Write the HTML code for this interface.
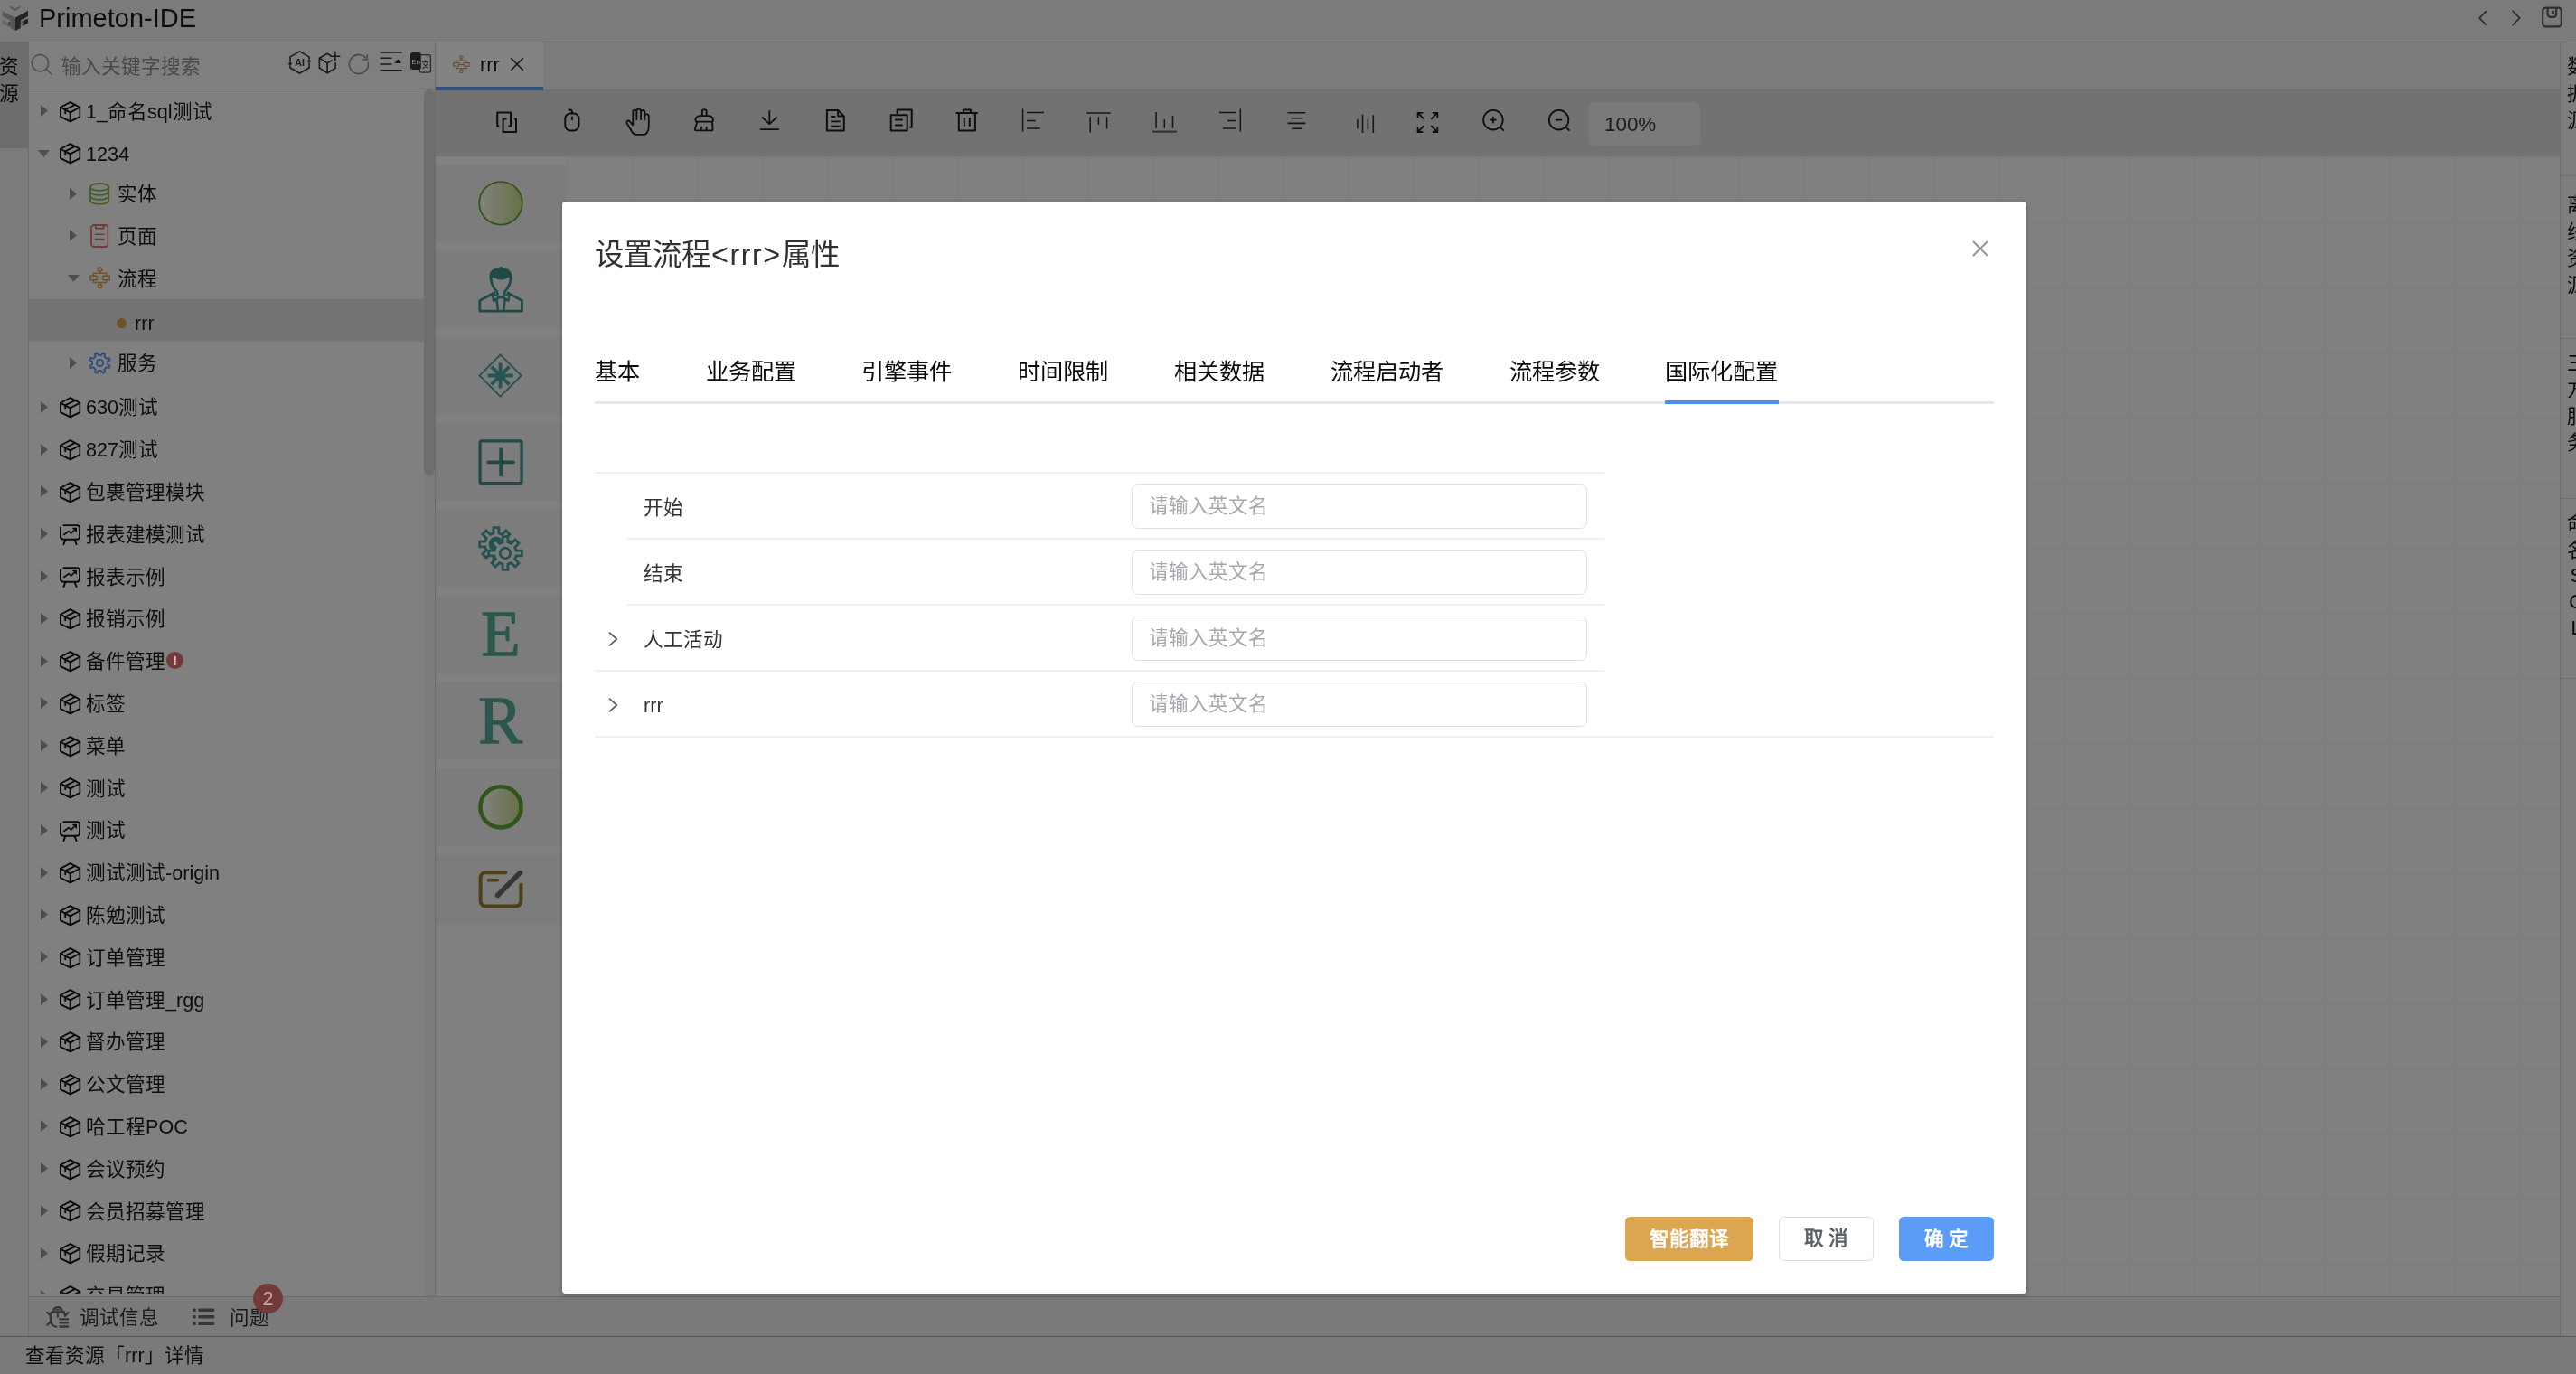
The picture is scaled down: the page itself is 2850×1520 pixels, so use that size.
<!DOCTYPE html>
<html lang="zh-CN">
<head>
<meta charset="utf-8">
<title>Primeton-IDE</title>
<style>
*{box-sizing:border-box;margin:0;padding:0}
html,body{width:2850px;height:1520px;overflow:hidden;background:#808080}
body{position:relative;font-family:"Liberation Sans",sans-serif;font-size:21.6px;color:#111;-webkit-font-smoothing:antialiased}
#W{position:absolute;left:0;top:0;width:2850px;height:1520px;will-change:transform}
.abs{position:absolute}
svg{display:block;overflow:visible}
/* ---------- title bar ---------- */
#titlebar{position:absolute;left:0;top:0;width:2850px;height:47px;background:#7b7b7b;border-bottom:1px solid #6b6b6b}
#titlebar .name{position:absolute;left:43px;top:0;height:40px;line-height:40px;font-size:29px;color:#0d0d0d;letter-spacing:0}
/* ---------- left strip ---------- */
#lstrip{position:absolute;left:0;top:47px;width:32px;height:1431px;background:#7b7b7b;border-right:1px solid #6e6e6e}
#lstrip .act{position:absolute;left:0;top:0;width:31px;height:117px;background:#6d6d6d}
#lstrip .act span{position:absolute;left:-1px;width:22px;font-size:21.6px;line-height:30px;color:#0a0a0a}
/* ---------- search ---------- */
#search{position:absolute;left:32px;top:47px;width:449px;height:52px;background:#7f7f7f;border-bottom:1px solid #6e6e6e}
#search .ph{position:absolute;left:36px;top:0;height:52px;line-height:53px;font-size:21.6px;color:#494949}
/* ---------- tree ---------- */
#tree{position:absolute;left:32px;top:99px;width:449px;height:1333.4px;background:#808080;overflow:hidden}
#tree .row{position:absolute;left:0;width:437px;height:46.8px;line-height:46.8px;white-space:nowrap;color:#0d0d0d}
#tree .row.sel{background:#747474}
#tree .row .t{position:absolute;top:3.4px;margin-left:-1px}
#tree .row .ar{position:absolute;top:0}
#tree .row .ic{position:absolute}
#vsb{position:absolute;left:469px;top:99px;width:12px;height:1335px;background:#7b7b7b}
#vsb i{position:absolute;left:0;top:0;width:12px;height:427px;background:#6e6e6e;border-radius:6px}
#vline{position:absolute;left:481px;top:47px;width:1px;height:1387px;background:#6b6b6b}
/* ---------- editor tabs ---------- */
#tabs{position:absolute;left:482px;top:47px;width:2350px;height:53px;background:#7b7b7b;border-bottom:1px solid #6c6c6c}
#tabs .tab{position:absolute;left:0;top:0;width:119px;height:53px;background:#838383;border-bottom:4px solid #2d4e7c}
#tabs .tab .t{position:absolute;left:49px;top:0;line-height:49px;font-size:21.6px;color:#0d0d0d}
/* ---------- toolbar ---------- */
#toolbar{position:absolute;left:482px;top:100px;width:2350px;height:72.8px;background:#727272}
#toolbar .zoom{position:absolute;left:1275px;top:13px;width:124px;height:48px;border-radius:7px;background:#7a7a7a;font-size:22.4px;line-height:49px;padding-left:18px;color:#1c1c1c}
/* ---------- palette ---------- */
#palette{position:absolute;left:482px;top:172px;width:144.6px;height:1262px;background:#818181}
#palette .it{position:absolute;left:0;width:144.6px;height:86px;background:#7c7c7c}
/* ---------- canvas ---------- */
#canvas{position:absolute;left:626px;top:172px;width:2206px;height:1262px;background-color:#808080;
background-image:linear-gradient(to right,#7a7a7a 0,#7a7a7a 1.5px,transparent 1.5px),linear-gradient(to bottom,#7a7a7a 0,#7a7a7a 1.5px,transparent 1.5px);
background-size:72px 72px;background-position:.5px 1.4px}
/* ---------- right bar ---------- */
#rbar{position:absolute;left:2832px;top:47px;width:18px;height:1431px;background:#7e7e7e;border-left:1px solid #6b6b6b;overflow:hidden}
#rbar .sec{position:absolute;left:0;width:18px;border-bottom:1px solid #6e6e6e}
#rbar .sec span{position:absolute;left:6.6px;margin-top:1.4px;width:22px;font-size:21.6px;line-height:30px;color:#0a0a0a;text-align:center}
/* ---------- bottom ---------- */
#bottom{position:absolute;left:32px;top:1434px;width:2800px;height:44px;background:#7a7a7a;border-top:1px solid #6b6b6b}
#bottom .t{position:absolute;top:0;line-height:46px;font-size:21.6px;color:#1a1a1a}
#badge{position:absolute;left:280px;top:1420px;width:33px;height:33px;border-radius:17px;background:#723a38;color:#c4a6a5;font-size:21.6px;line-height:34px;text-align:center}
#status{position:absolute;left:0;top:1478px;width:2850px;height:42px;background:#7a7a7a;border-top:1.6px solid #575757}
#status .t{position:absolute;left:28px;top:0;line-height:42px;font-size:21.6px;color:#0d0d0d}
/* ---------- modal ---------- */
#modal{position:absolute;left:622px;top:223px;width:1620px;height:1208px;background:#fff;border-radius:4px;box-shadow:0 1.8px 4.5px rgba(0,0,0,.26)}
#modal .title{position:absolute;left:36px;top:37.4px;font-size:32.4px;line-height:44px;color:#303133;white-space:nowrap}
#mtabs{position:absolute;left:36px;top:150.8px;width:1548px;height:73px;border-bottom:3.6px solid #e4e7ed}
#mtabs span{position:absolute;top:0;font-size:25.2px;line-height:74px;color:#0a0a0a;white-space:nowrap}
#mtabs i{position:absolute;left:1184px;top:69.4px;width:126px;height:3.6px;background:#4a8ff0}
#tbl{position:absolute;left:36px;top:299px;width:1548px;height:294px}
#tbl .ln{position:absolute;height:1.6px;background:#eef0f6}
#tbl .lab{position:absolute;left:54px;margin-top:1.5px;font-size:21.6px;line-height:73px;color:#333;white-space:nowrap}
#tbl .inp{position:absolute;left:594px;margin-top:1.4px;width:504px;height:49.4px;border:1.8px solid #dcdfe6;border-radius:7.2px;font-size:21.6px;line-height:48.4px;padding-left:17.8px;color:#a6a8ae;white-space:nowrap}
.btn{position:absolute;top:1123px;height:49px;border-radius:5.4px;font-size:21.6px;line-height:49px;text-align:center;font-weight:bold;white-space:nowrap}
</style>
</head>
<body>
<div id="W">
<svg width="0" height="0" style="position:absolute;left:0;top:0"><defs>
<linearGradient id="gS" x1="0" y1="0" x2="1" y2="0"><stop offset="0" stop-color="#82837c"/><stop offset=".5" stop-color="#757963"/><stop offset="1" stop-color="#687145"/></linearGradient>
<symbol id="cube" viewBox="0 0 24 24"><g fill="none" stroke="#0a0a0a" stroke-width="1.95" stroke-linejoin="round" stroke-linecap="round"><path d="M12 1.1 L23 6.9 L23 17.5 L12 23 L1 17.5 L1 6.9 Z"/><path d="M1 6.9 L12 12.7 L23 6.9 M12 12.7 V23"/><path d="M6.2 9.6 L17.6 3.9 M6.4 10 V13.6"/></g></symbol>
<symbol id="chart" viewBox="0 0 24 24"><g fill="none" stroke="#0a0a0a" stroke-width="2" stroke-linejoin="round" stroke-linecap="round"><path d="M4.6 1.2 H19.8 a3.2 3.2 0 0 1 3.2 3.2 V14.2 a3.2 3.2 0 0 1 -3.2 3.2 H4.2 a3.2 3.2 0 0 1 -3.2 -3.2 V3.6"/><path d="M5 12 L10.3 8 L13.2 10.3 L18.6 5.2 M15.6 4.7 H19 V8" stroke-width="1.7"/><path d="M6.6 17.6 L4.6 23.2 M17.2 17.6 L19.4 23.2"/></g></symbol>
<symbol id="db" viewBox="0 0 22.4 24.8"><g fill="none" stroke="#3f6027" stroke-width="1.8"><ellipse cx="11.2" cy="4.9" rx="10.2" ry="4"/><path d="M1 4.9 V19.9 a10.2 4 0 0 0 20.4 0 V4.9"/><path d="M1 9.9 a10.2 4 0 0 0 20.4 0 M1 14.9 a10.2 4 0 0 0 20.4 0"/><path d="M18 12.2 v.1 M18 17.2 v.1 M18 22 v.1" stroke-linecap="round" stroke-width="1.6"/></g></symbol>
<symbol id="page" viewBox="0 0 20.4 26"><g fill="none" stroke="#723a38" stroke-width="1.8" stroke-linejoin="round"><rect x="1" y="1" width="18.4" height="24" rx="3"/><path d="M5.8 1 V4.6 H14.6 V1"/><path d="M4.8 11.2 H15.6" stroke-width="1.6"/><path d="M4.8 16.8 H15.6" stroke-width="2.2"/></g></symbol>
<symbol id="flow" viewBox="0 0 23 24.5"><g fill="none" stroke="#6e5227" stroke-width="1.5"><circle cx="11.5" cy="2.9" r="2.1"/><circle cx="11.5" cy="21.7" r="2.1"/><path d="M11.5 5 V7.2 M4.4 10.2 V7.2 H18.6 V10.2 M8 12.4 H15 M4.4 14.7 V17.6 H18.6 V14.7 M11.5 17.6 V19.6"/><rect x=".8" y="10.2" width="7.2" height="4.5"/><rect x="15" y="10.2" width="7.2" height="4.5"/></g></symbol>
<symbol id="gear" viewBox="0 0 25 25"><g fill="none" stroke="#2d4e7c" stroke-width="1.9" stroke-linejoin="round"><path d="M21.0 14.0 L23.6 15.8 L22.7 18.0 L19.6 17.4 L17.4 19.6 L18.0 22.7 L15.8 23.6 L14.0 21.0 L11.0 21.0 L9.2 23.6 L7.0 22.7 L7.6 19.6 L5.4 17.4 L2.3 18.0 L1.4 15.8 L4.0 14.0 L4.0 11.0 L1.4 9.2 L2.3 7.0 L5.4 7.6 L7.6 5.4 L7.0 2.3 L9.2 1.4 L11.0 4.0 L14.0 4.0 L15.8 1.4 L18.0 2.3 L17.4 5.4 L19.6 7.6 L22.7 7.0 L23.6 9.2 L21.0 11.0 Z"/><circle cx="12.5" cy="12.5" r="3.6"/></g></symbol>
<symbol id="ar" viewBox="0 0 8 13"><path d="M0 0 L8 6.5 L0 13 Z" fill="#4f4f4f"/></symbol>
<symbol id="ad" viewBox="0 0 13 8"><path d="M0 0 H13 L6.5 8 Z" fill="#4f4f4f"/></symbol>
</defs></svg>
<div id="titlebar"><div class="name">Primeton-IDE</div><svg class="abs" style="left:0;top:0" width="2850" height="46" viewBox="0 0 2850 46">
<g>
<polygon points="11.2,6.6 17,9.5 22.5,6.6 22.5,8.6 17,11.9 11.2,8.8" fill="#5a5a5a"/>
<polygon points="2.9,12.4 17,19.4 17,34 11.7,31.3 11.7,22.5 2.9,18" fill="#575757"/>
<polygon points="31,11.7 17,19.4 17,34 22.8,30.9 22.8,22.3 31,18" fill="#242424"/>
<polygon points="2.9,21.6 9.2,24.5 9.2,29.6 2.9,26.7" fill="#676767"/>
<polygon points="9.2,24.5 11.7,23.3 11.7,28.2 9.2,29.6" fill="#474747"/>
<polygon points="25.4,23.3 31,20.4 31,25.5 25.4,28.7" fill="#202020"/>
<polygon points="23.3,22.5 25.4,23.3 25.4,28.7 23.3,27.7" fill="#585858"/>
</g>
<g fill="none" stroke="#2f2f2f" stroke-width="1.7" stroke-linecap="round" stroke-linejoin="round">
<path d="M2750.6 12.3 L2743.1 19.9 L2750.6 27.5"/><path d="M2780.2 12.3 L2787.7 19.9 L2780.2 27.5"/>
<rect x="2813.2" y="8.6" width="20.6" height="20.8" rx="3.4" stroke-width="2.2"/>
<path d="M2818.6 9 V15.6 a3.2 3.2 0 0 0 3.2 3.2 H2825 a3.2 3.2 0 0 0 3.2 -3.2 V9" stroke-width="2.2"/>
<path d="M2825 12.4 V15.2" stroke-width="1.8"/>
</g></svg></div>
<div id="lstrip"><div class="act"><span style="top:12px">资</span><span style="top:42px">源</span></div></div>
<div id="search"><svg class="abs" style="left:0;top:0" width="449" height="52" viewBox="32 47 449 52">
<g fill="none" stroke="#4d4d4d" stroke-width="1.5" stroke-linecap="round"><circle cx="44.4" cy="69.7" r="9.2"/><path d="M51 76.3 L56.8 82"/></g>
<g fill="none" stroke="#1a1a1a" stroke-width="1.6" stroke-linejoin="round" stroke-linecap="round">
<path d="M331.5 56.9 L342 62.9 V65.2 M342 70 V75 L331.5 81 L321 75 V72.8 M321 68 V62.9 L331.5 56.9"/>
<path d="M362.1 59.3 L353.4 64.2 V75.4 L362.1 80.7 L371.1 75.4 V69.8 M353.4 64.2 L362.1 69.8 V80.7 M362.1 69.8 L367 66.9 M362.1 59.3 L365.4 61.2"/>
<path d="M370.8 57.4 V66.7 M365.8 62.3 H375.8"/>
<path d="M421.1 58 H444.1 M421.1 64.3 H432.9 M421.1 71 H432.9 M421.1 77.9 H444.1"/>
</g>
<circle cx="321" cy="70.4" r="1.7" fill="#1a1a1a"/><circle cx="342" cy="67.6" r="1.7" fill="#1a1a1a"/>
<text x="331.6" y="73" font-size="10.5" font-weight="bold" text-anchor="middle" fill="#1a1a1a" font-family="Liberation Sans,sans-serif">AI</text>
<path d="M436.4 69.9 L440.3 65.4 L444.2 69.9 Z" fill="#1a1a1a"/>
<g fill="none" stroke="#4a4a4a" stroke-width="1.6" stroke-linecap="round" stroke-linejoin="round"><path d="M404.6 63.9 A10.5 10.5 0 1 0 407.3 69.6"/><path d="M406.3 60.9 V66 H401.2"/></g>
<rect x="464.4" y="60.7" width="12" height="19.4" rx="2" fill="none" stroke="#2c2c2c" stroke-width="1.3"/>
<path d="M467.2 68.6 H474.2 M470.6 66.6 V68.6 M468.4 70 Q470.8 74.4 473.8 75.6 M473 70 Q470.6 74.6 467.6 75.8" fill="none" stroke="#2c2c2c" stroke-width="1.1"/>
<rect x="454" y="58" width="11.8" height="19" rx="2.4" fill="#1c1c1c"/>
<text x="455.6" y="71.4" font-size="7.6" fill="#9c9c9c" font-family="Liberation Sans,sans-serif">En</text>
</svg><div class="ph">输入关键字搜索</div></div>
<div id="tree">
<div class="row" style="top:-1.6px"><svg class="ar" style="left:13.0px;top:18.9px" width="8" height="13"><use href="#ar"/></svg><svg class="ic" style="left:33.7px;top:14.2px" width="23.4" height="23.4"><use href="#cube"/></svg><span class="t" style="left:64px">1_命名sql测试</span></div>
<div class="row" style="top:45.2px"><svg class="ar" style="left:10.4px;top:21.8px" width="13" height="8"><use href="#ad"/></svg><svg class="ic" style="left:33.7px;top:14.2px" width="23.4" height="23.4"><use href="#cube"/></svg><span class="t" style="left:64px">1234</span></div>
<div class="row" style="top:92.0px"><svg class="ar" style="left:45.2px;top:16.7px" width="8" height="13"><use href="#ar"/></svg><svg class="ic" style="left:67.2px;top:10.8px" width="22.4" height="24.8"><use href="#db"/></svg><span class="t" style="left:98.8px;top:1.2px">实体</span></div>
<div class="row" style="top:138.8px"><svg class="ar" style="left:45.2px;top:16.7px" width="8" height="13"><use href="#ar"/></svg><svg class="ic" style="left:68.2px;top:10.2px" width="20.4" height="26"><use href="#page"/></svg><span class="t" style="left:98.8px;top:1.2px">页面</span></div>
<div class="row" style="top:185.6px"><svg class="ar" style="left:42.6px;top:19.6px" width="13" height="8"><use href="#ad"/></svg><svg class="ic" style="left:66.9px;top:10.9px" width="23" height="24.5"><use href="#flow"/></svg><span class="t" style="left:98.8px;top:1.2px">流程</span></div>
<div class="row sel" style="top:232.4px"><i style="position:absolute;left:97px;top:20.5px;width:11px;height:11px;border-radius:6px;background:#6e5227"></i><span class="t" style="left:118px">rrr</span></div>
<div class="row" style="top:279.2px"><svg class="ar" style="left:45.2px;top:16.7px" width="8" height="13"><use href="#ar"/></svg><svg class="ic" style="left:65.9px;top:10.7px" width="25" height="25"><use href="#gear"/></svg><span class="t" style="left:98.8px;top:1.2px">服务</span></div>
<div class="row" style="top:326.0px"><svg class="ar" style="left:13.0px;top:18.9px" width="8" height="13"><use href="#ar"/></svg><svg class="ic" style="left:33.7px;top:14.2px" width="23.4" height="23.4"><use href="#cube"/></svg><span class="t" style="left:64px">630测试</span></div>
<div class="row" style="top:372.8px"><svg class="ar" style="left:13.0px;top:18.9px" width="8" height="13"><use href="#ar"/></svg><svg class="ic" style="left:33.7px;top:14.2px" width="23.4" height="23.4"><use href="#cube"/></svg><span class="t" style="left:64px">827测试</span></div>
<div class="row" style="top:419.6px"><svg class="ar" style="left:13.0px;top:18.9px" width="8" height="13"><use href="#ar"/></svg><svg class="ic" style="left:33.7px;top:14.2px" width="23.4" height="23.4"><use href="#cube"/></svg><span class="t" style="left:64px">包裹管理模块</span></div>
<div class="row" style="top:466.4px"><svg class="ar" style="left:13.0px;top:18.9px" width="8" height="13"><use href="#ar"/></svg><svg class="ic" style="left:33.9px;top:14.9px" width="23" height="23"><use href="#chart"/></svg><span class="t" style="left:64px">报表建模测试</span></div>
<div class="row" style="top:513.2px"><svg class="ar" style="left:13.0px;top:18.9px" width="8" height="13"><use href="#ar"/></svg><svg class="ic" style="left:33.9px;top:14.9px" width="23" height="23"><use href="#chart"/></svg><span class="t" style="left:64px">报表示例</span></div>
<div class="row" style="top:560.0px"><svg class="ar" style="left:13.0px;top:18.9px" width="8" height="13"><use href="#ar"/></svg><svg class="ic" style="left:33.7px;top:14.2px" width="23.4" height="23.4"><use href="#cube"/></svg><span class="t" style="left:64px">报销示例</span></div>
<div class="row" style="top:606.8px"><svg class="ar" style="left:13.0px;top:18.9px" width="8" height="13"><use href="#ar"/></svg><svg class="ic" style="left:33.7px;top:14.2px" width="23.4" height="23.4"><use href="#cube"/></svg><span class="t" style="left:64px">备件管理</span><i style="position:absolute;left:152.4px;top:15.3px;width:18.6px;height:18.6px;border-radius:10px;background:#723a38;color:#d6bcbc;font-style:normal;font-weight:bold;font-size:15px;line-height:19px;text-align:center">!</i></div>
<div class="row" style="top:653.6px"><svg class="ar" style="left:13.0px;top:18.9px" width="8" height="13"><use href="#ar"/></svg><svg class="ic" style="left:33.7px;top:14.2px" width="23.4" height="23.4"><use href="#cube"/></svg><span class="t" style="left:64px">标签</span></div>
<div class="row" style="top:700.4px"><svg class="ar" style="left:13.0px;top:18.9px" width="8" height="13"><use href="#ar"/></svg><svg class="ic" style="left:33.7px;top:14.2px" width="23.4" height="23.4"><use href="#cube"/></svg><span class="t" style="left:64px">菜单</span></div>
<div class="row" style="top:747.2px"><svg class="ar" style="left:13.0px;top:18.9px" width="8" height="13"><use href="#ar"/></svg><svg class="ic" style="left:33.7px;top:14.2px" width="23.4" height="23.4"><use href="#cube"/></svg><span class="t" style="left:64px">测试</span></div>
<div class="row" style="top:794.0px"><svg class="ar" style="left:13.0px;top:18.9px" width="8" height="13"><use href="#ar"/></svg><svg class="ic" style="left:33.9px;top:14.9px" width="23" height="23"><use href="#chart"/></svg><span class="t" style="left:64px">测试</span></div>
<div class="row" style="top:840.8px"><svg class="ar" style="left:13.0px;top:18.9px" width="8" height="13"><use href="#ar"/></svg><svg class="ic" style="left:33.7px;top:14.2px" width="23.4" height="23.4"><use href="#cube"/></svg><span class="t" style="left:64px">测试测试-origin</span></div>
<div class="row" style="top:887.6px"><svg class="ar" style="left:13.0px;top:18.9px" width="8" height="13"><use href="#ar"/></svg><svg class="ic" style="left:33.7px;top:14.2px" width="23.4" height="23.4"><use href="#cube"/></svg><span class="t" style="left:64px">陈勉测试</span></div>
<div class="row" style="top:934.4px"><svg class="ar" style="left:13.0px;top:18.9px" width="8" height="13"><use href="#ar"/></svg><svg class="ic" style="left:33.7px;top:14.2px" width="23.4" height="23.4"><use href="#cube"/></svg><span class="t" style="left:64px">订单管理</span></div>
<div class="row" style="top:981.2px"><svg class="ar" style="left:13.0px;top:18.9px" width="8" height="13"><use href="#ar"/></svg><svg class="ic" style="left:33.7px;top:14.2px" width="23.4" height="23.4"><use href="#cube"/></svg><span class="t" style="left:64px">订单管理_rgg</span></div>
<div class="row" style="top:1028.0px"><svg class="ar" style="left:13.0px;top:18.9px" width="8" height="13"><use href="#ar"/></svg><svg class="ic" style="left:33.7px;top:14.2px" width="23.4" height="23.4"><use href="#cube"/></svg><span class="t" style="left:64px">督办管理</span></div>
<div class="row" style="top:1074.8px"><svg class="ar" style="left:13.0px;top:18.9px" width="8" height="13"><use href="#ar"/></svg><svg class="ic" style="left:33.7px;top:14.2px" width="23.4" height="23.4"><use href="#cube"/></svg><span class="t" style="left:64px">公文管理</span></div>
<div class="row" style="top:1121.6px"><svg class="ar" style="left:13.0px;top:18.9px" width="8" height="13"><use href="#ar"/></svg><svg class="ic" style="left:33.7px;top:14.2px" width="23.4" height="23.4"><use href="#cube"/></svg><span class="t" style="left:64px">哈工程POC</span></div>
<div class="row" style="top:1168.4px"><svg class="ar" style="left:13.0px;top:18.9px" width="8" height="13"><use href="#ar"/></svg><svg class="ic" style="left:33.7px;top:14.2px" width="23.4" height="23.4"><use href="#cube"/></svg><span class="t" style="left:64px">会议预约</span></div>
<div class="row" style="top:1215.2px"><svg class="ar" style="left:13.0px;top:18.9px" width="8" height="13"><use href="#ar"/></svg><svg class="ic" style="left:33.7px;top:14.2px" width="23.4" height="23.4"><use href="#cube"/></svg><span class="t" style="left:64px">会员招募管理</span></div>
<div class="row" style="top:1262.0px"><svg class="ar" style="left:13.0px;top:18.9px" width="8" height="13"><use href="#ar"/></svg><svg class="ic" style="left:33.7px;top:14.2px" width="23.4" height="23.4"><use href="#cube"/></svg><span class="t" style="left:64px">假期记录</span></div>
<div class="row" style="top:1308.8px"><svg class="ar" style="left:13.0px;top:18.9px" width="8" height="13"><use href="#ar"/></svg><svg class="ic" style="left:33.7px;top:14.2px" width="23.4" height="23.4"><use href="#cube"/></svg><span class="t" style="left:64px">交易管理</span></div>
</div>
<div id="vsb"><i></i></div>
<div id="vline"></div>
<div id="tabs"><div class="tab"><svg class="abs" style="left:19.2px;top:14.2px" width="18.8" height="20.4"><use href="#flow"/></svg>
<svg class="abs" style="left:0;top:0" width="119" height="52" viewBox="482 47 119 52"><path d="M565.3 64.3 L578.8 77.8 M578.8 64.3 L565.3 77.8" stroke="#111" stroke-width="1.5" fill="none"/></svg><div class="t">rrr</div></div></div>
<div id="toolbar"><svg class="abs" style="left:0;top:0" width="1300" height="72" viewBox="482 100 1300 72">
<g fill="none" stroke="#0e0e0e" stroke-width="2" stroke-linejoin="round" stroke-linecap="butt">
<path d="M562.4 139.4 H565 V124.6 H550.2 V139.4 H552.4"/><path d="M560.6 131.6 H556.6 V146 H571 V131.6 H568.8"/>
<rect x="625.3" y="125.6" width="15.2" height="18.8" rx="5.6"/><path d="M632.9 125.6 V123.8 Q632.9 121.4 630.4 121.4 H628.6 M632.9 128.8 V132.8"/>
<path d="M776.8 128 V122.9 a1.5 1.5 0 0 1 1.5 -1.5 H780.1 a1.5 1.5 0 0 1 1.5 1.5 V128" stroke-width="1.9"/>
<path d="M771.2 134.6 C768.6 134.6 769.2 131.4 770.8 129.6 C771.8 128.3 772.8 128.1 774 128.1 H784.4 C785.6 128.1 786.6 128.3 787.6 129.6 C789.2 131.4 789.8 134.6 787.2 134.6 Z" stroke-width="1.9"/>
<path d="M771.4 134.8 L768.9 142.8 Q768.5 144.4 770.2 144.4 H787 Q788.6 144.4 788.5 142.8 L788 134.8 M775.2 144.2 L776.6 140 M781.2 144.2 L782 140" stroke-width="1.9"/>
<path d="M851.3 122.2 V136.6 M842.9 129.3 L851.3 137.2 L859.7 129.3 M840.8 143.1 H861.8" stroke-width="1.8"/>
<path d="M914.9 121.9 H927.2 L933.8 128.5 V144.4 H914.9 Z M927.2 122 V128.5 H933.7"/><path d="M919.2 129 H924.4 M919.2 134.4 H929.8 M919.2 139.7 H929.8" stroke-width="1.8"/>
<rect x="985.7" y="127.3" width="18" height="17.1"/><path d="M990 132.6 H998.8 M990 138.4 H998.8"/><path d="M992.6 126 V121.5 H1008.7 V140.8 H1006.4"/>
<path d="M1057.6 125.1 H1081.8 M1065.9 125 V121.4 H1073.9 V125 M1060.8 125 V144.4 H1078.9 V125 M1066.8 130 V139.8 M1072.8 130 V139.8"/>
</g>
<g fill="none" stroke="#0e0e0e" stroke-width="1.8" stroke-linejoin="round" stroke-linecap="round">
<path d="M700.3 137.4 V123.7 a2.05 2.05 0 0 1 4.1 0 V132.2 M704.4 124 V122.9 a2.3 2.3 0 0 1 4.6 0 V132.2 M709 124.2 a2.2 2.2 0 0 1 4.4 0 V132.4 M713.4 128.6 a2.2 2.2 0 0 1 4.4 0 V139.4 C717.8 144.4 715.6 148.8 712.2 148.8 H703.6 C701.2 148.8 699.6 146.8 698.2 144 L693.6 136.2 C692.6 134.2 695 132.6 696.6 134.2 L700.3 138.4"/>
</g>
<g fill="none" stroke="#161616" stroke-width="1.5" stroke-linecap="butt">
<path d="M1131.6 120.6 V145.8 M1136 124.6 H1155 M1136 133.4 H1145.8 M1136 142.1 H1150.8"/>
<path d="M1206.2 129.2 V146.4 M1215.4 129.2 V138 M1224.6 129.2 V142.6"/><path d="M1202 125 H1228.7" stroke="#2e2e2e" stroke-width="2"/>
<path d="M1279.1 123.9 V141.7 M1288.3 132.2 V141.7 M1297.5 128 V141.7"/><path d="M1275 145.6 H1301.8" stroke="#2e2e2e" stroke-width="2"/>
<path d="M1372.3 120.6 V145.8 M1348.9 124.6 H1368 M1358 133.4 H1368 M1353 142.1 H1368"/>
<path d="M1424.6 124.8 H1444.4 M1428.6 130.7 H1440.5 M1424.6 136.4 H1444.4 M1429.2 142.2 H1439.9" stroke-width="1.6"/>
<path d="M1501.9 131.7 V142.2 M1507.5 126.8 V147 M1513.4 131.7 V143.6 M1519.3 127.2 V147" stroke-width="1.6"/>
</g>
<g fill="none" stroke="#0e0e0e" stroke-width="1.8" stroke-linejoin="miter">
<path d="M1568.6 130.4 V124.8 H1574.2 M1569 125.2 L1575.6 131.8 M1584.7 124.8 H1590.3 V130.4 M1589.9 125.2 L1583.3 131.8 M1568.6 140.4 V146 H1574.2 M1569 145.6 L1575.6 139 M1590.3 140.4 V146 H1584.7 M1589.9 145.6 L1583.3 139"/>
<circle cx="1651.9" cy="132.7" r="10.8"/><path d="M1659.6 140.6 L1663.8 144.6 M1648.3 132.7 H1655.5 M1651.9 129.1 V136.3"/>
<circle cx="1724.6" cy="132.7" r="10.8"/><path d="M1732.3 140.6 L1736.5 144.6 M1721 132.7 H1728.2"/>
</g>
</svg><div class="zoom">100%</div></div>
<div id="palette">
<div class="it" style="top:9.8px"></div><div class="it" style="top:105.2px"></div><div class="it" style="top:200.6px"></div><div class="it" style="top:296px"></div><div class="it" style="top:391.4px"></div><div class="it" style="top:486.8px"></div><div class="it" style="top:582.2px"></div><div class="it" style="top:677.6px"></div><div class="it" style="top:773px;height:78px"></div>
<svg class="abs" style="left:0;top:0" width="140" height="900" viewBox="482 172 140 900">
<circle cx="554" cy="224.8" r="23.8" fill="url(#gS)" stroke="#2e531b" stroke-width="1.7"/>
<g fill="none" stroke="#1f4a48" stroke-width="2.8" stroke-linejoin="round" stroke-linecap="round">
<path d="M546.9 323.9 L530.8 332.5 V344.2 H577.4 V332.5 L561.9 323.9"/>
<path d="M543.4 304 C542.2 311.4 544.8 317.4 549.8 322.6 L550.3 325.2 M564.8 304 C566 311.4 563.4 317.4 558.4 322.6 L557.9 325.2"/>
<path d="M546.8 326.2 L560.4 331 M561.6 326.2 L548 331 M545 327.2 L545.9 332.6 L549.4 331.6 M563.4 327.2 L562.5 332.6 L559 331.6" stroke-width="2.2"/>
<path d="M549.6 332 L551 344 M558.6 332 L557.2 344" stroke-width="2.4"/>
</g>
<path d="M541.9 309 C540.8 301.8 543.2 298.8 546.6 297.6 L548.6 296.4 L550.4 296.8 L552 295.8 L554.6 294.8 L556.6 296 L558.6 296.2 L560.8 297.2 C564.8 299 567.6 302.8 566.5 310.4 L564.9 310.8 C564.9 308.8 564.1 307.4 562.5 306.6 C557.7 310.6 550.5 310.6 545.7 306.6 C544.3 307.4 543.5 308.8 543.5 310.8 Z" fill="#1f4a48"/>
<g fill="none" stroke="#265452"><path d="M553.6 392.4 L576.8 415.5 L553.6 438.6 L530.5 415.5 Z" stroke-width="1.9"/>
<path d="M539.6 415.5 H567.6 M553.6 401.5 V429.5 M543.7 405.6 L563.5 425.4 M563.5 405.6 L543.7 425.4" stroke-width="4"/></g>
<rect x="531.1" y="487.9" width="46" height="46.8" rx="2" fill="none" stroke="#1f4a48" stroke-width="3.3"/>
<path d="M540.2 511.3 H568 M554.1 497.2 V525.4" stroke="#1f4a48" stroke-width="3.7" stroke-linecap="round" fill="none"/>
<g fill="none" stroke="#245250" stroke-width="2.8" stroke-linejoin="miter">
<path d="M561.1 599.1 L567.2 599.1 L567.2 604.9 L561.1 604.9 L559.6 608.5 L563.9 612.9 L559.8 617.0 L555.4 612.7 L551.8 614.2 L551.8 620.3 L546.0 620.3 L546.0 614.2 L542.4 612.7 L538.0 617.0 L533.9 612.9 L538.2 608.5 L536.7 604.9 L530.6 604.9 L530.6 599.1 L536.7 599.1 L538.2 595.5 L533.9 591.1 L538.0 587.0 L542.4 591.3 L546.0 589.8 L546.0 583.7 L551.8 583.7 L551.8 589.8 L555.4 591.3 L559.8 587.0 L563.9 591.1 L559.6 595.5 Z"/><circle cx="548.9" cy="602" r="6.2" stroke-width="4.2"/>
<path d="M571.2 609.1 L577.3 609.1 L577.3 614.9 L571.2 614.9 L569.7 618.5 L574.0 622.9 L569.9 627.0 L565.5 622.7 L561.9 624.2 L561.9 630.3 L556.1 630.3 L556.1 624.2 L552.5 622.7 L548.1 627.0 L544.0 622.9 L548.3 618.5 L546.8 614.9 L540.7 614.9 L540.7 609.1 L546.8 609.1 L548.3 605.5 L544.0 601.1 L548.1 597.0 L552.5 601.3 L556.1 599.8 L556.1 593.7 L561.9 593.7 L561.9 599.8 L565.5 601.3 L569.9 597.0 L574.0 601.1 L569.7 605.5 Z" fill="#7c7c7c"/>
<circle cx="559" cy="612" r="5.8"/></g>
<text x="554" y="725.4" font-family="Liberation Serif,serif" font-size="71" text-anchor="middle" fill="#2b574e" stroke="#2b574e" stroke-width="1.3">E</text>
<text x="553.6" y="821.6" font-family="Liberation Serif,serif" font-size="73" text-anchor="middle" fill="#2b574e" stroke="#2b574e" stroke-width="1.3">R</text>
<circle cx="554" cy="892.8" r="22.6" fill="url(#gS)" stroke="#30551c" stroke-width="4.6"/>
<g fill="none" stroke-linecap="round" stroke-linejoin="round">
<path d="M559.4 965.2 H537.2 a5.6 5.6 0 0 0 -5.6 5.6 V996.8 a5.6 5.6 0 0 0 5.6 5.6 H570.8 a5.6 5.6 0 0 0 5.6 -5.6 V978.4" stroke="#4d3f18" stroke-width="4"/>
<path d="M540.4 973.8 H550.4" stroke="#4d3f18" stroke-width="3.6"/>
<path d="M550.6 990.4 L575.4 965.6" stroke="#363636" stroke-width="5.6"/></g>
</svg>
</div>
<div id="canvas"></div>
<div class="abs" style="left:482px;top:172px;width:2350px;height:.8px;background:#727272"></div>
<div id="rbar">
<div class="sec" style="top:0;height:148px"><span style="top:11px">数</span><span style="top:41px">据</span><span style="top:71px">源</span></div>
<div class="sec" style="top:148px;height:180px"><span style="top:16px">离</span><span style="top:46px">线</span><span style="top:75px">资</span><span style="top:105px">源</span></div>
<div class="sec" style="top:328px;height:177px"><span style="top:11px">三</span><span style="top:40px">方</span><span style="top:70px">服</span><span style="top:99px">务</span></div>
<div class="sec" style="top:505px;height:199px"><span style="top:11px">命</span><span style="top:41px">名</span><span style="top:69px">S</span><span style="top:98px">Q</span><span style="top:127px">L</span></div>
</div>
<div id="bottom"><svg class="abs" style="left:0;top:0" width="300" height="44" viewBox="32 1435 300 44">
<g fill="none" stroke="#363636" stroke-width="2.2" stroke-linecap="round" stroke-linejoin="round">
<path d="M59.1 1450.6 C59.4 1447.4 61.4 1446.1 63.9 1446.1 C66.4 1446.1 68.4 1447.4 68.9 1450.6"/>
<path d="M61.9 1449.4 C62.6 1448.3 65.3 1448.3 66.1 1449.4" stroke-width="1.5"/>
<path d="M70.8 1451.4 H58.6 C56.7 1451.4 55.9 1452.6 55.9 1454.4 V1460.4 C55.9 1464.4 58.8 1467 62.4 1467.8"/>
<path d="M70.8 1451.4 C71.4 1452.6 71.8 1454 72 1455.8 L75.4 1451.9"/>
<path d="M63.9 1451.6 V1457" stroke-width="2"/>
<path d="M52.2 1451.9 L55.6 1454.8 M52.2 1465.6 L55.9 1462.2"/>
</g>
<g fill="#363636"><rect x="65.3" y="1458.2" width="10.8" height="2.4" rx="1.2"/><rect x="65.3" y="1462.2" width="10.8" height="2.4" rx="1.2"/><rect x="65.3" y="1466.3" width="10.8" height="2.4" rx="1.2"/>
<rect x="213.2" y="1447.4" width="3.6" height="3.6" rx="1"/><rect x="219.4" y="1447.4" width="17.8" height="3.6" rx="1"/>
<rect x="213.2" y="1454.9" width="3.6" height="3.6" rx="1"/><rect x="219.4" y="1454.9" width="17.8" height="3.6" rx="1"/>
<rect x="213.2" y="1462.4" width="3.6" height="3.6" rx="1"/><rect x="219.4" y="1462.4" width="17.8" height="3.6" rx="1"/></g>
</svg><div class="t" style="left:56px">调试信息</div><div class="t" style="left:222px">问题</div></div>
<div id="badge">2</div>
<div id="status"><div class="t">查看资源「rrr」详情</div></div>

<div id="modal">
<div class="title">设置流程<span style="letter-spacing:1.5px;margin-left:1px">&lt;rrr&gt;</span>属性</div>
<svg class="abs" style="left:1560px;top:43px" width="18" height="18" viewBox="0 0 18 18"><path d="M1 1 L17 17 M17 1 L1 17" stroke="#8f9299" stroke-width="1.8" fill="none"/></svg>
<div id="mtabs">
<span style="left:0">基本</span><span style="left:123px">业务配置</span><span style="left:295px">引擎事件</span><span style="left:468px">时间限制</span><span style="left:641px">相关数据</span><span style="left:814px">流程启动者</span><span style="left:1012px">流程参数</span><span style="left:1184px">国际化配置</span><i></i>
</div>
<div id="tbl">
<div class="ln" style="left:0;top:0;width:1117px"></div>
<div class="ln" style="left:36px;top:73px;width:1081px"></div>
<div class="ln" style="left:36px;top:146px;width:1081px"></div>
<div class="ln" style="left:0;top:219px;width:1117px"></div>
<div class="ln" style="left:0;top:292px;width:1548px"></div>
<div class="lab" style="top:1px">开始</div><div class="inp" style="top:12px">请输入英文名</div>
<div class="lab" style="top:74px">结束</div><div class="inp" style="top:85px">请输入英文名</div>
<div class="lab" style="top:147px">人工活动</div><div class="inp" style="top:158px">请输入英文名</div>
<div class="lab" style="top:220px">rrr</div><div class="inp" style="top:231px">请输入英文名</div>
<svg class="abs" style="left:14px;top:175.4px" width="12" height="20" viewBox="0 0 12 20"><path d="M2 2.6 L10.4 10 L2 17.4" stroke="#5c5f66" stroke-width="1.7" fill="none"/></svg>
<svg class="abs" style="left:14px;top:248.4px" width="12" height="20" viewBox="0 0 12 20"><path d="M2 2.6 L10.4 10 L2 17.4" stroke="#5c5f66" stroke-width="1.7" fill="none"/></svg>
</div>
<div class="btn" style="left:1176px;width:142px;background:#dca54f;color:#fff">智能翻译</div>
<div class="btn" style="left:1346px;width:105px;background:#fff;border:1.8px solid #dcdfe6;color:#5d6169;line-height:46px">取 消</div>
<div class="btn" style="left:1479px;width:105px;background:#5a9cf8;color:#fff">确 定</div>
</div>
</div>
</body>
</html>
